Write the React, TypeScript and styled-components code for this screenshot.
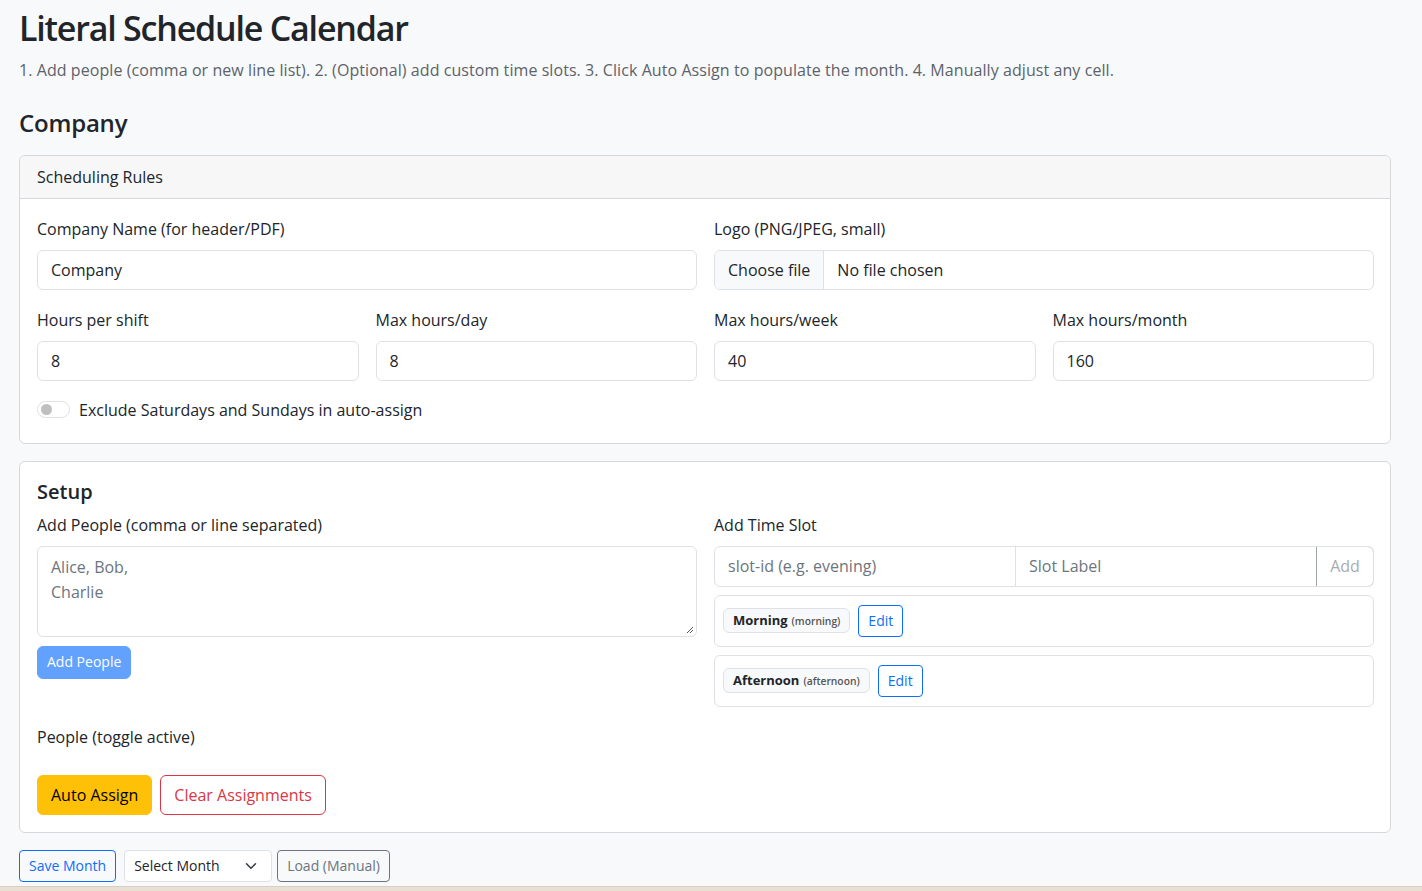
import React from "react";
import styled, { createGlobalStyle } from "styled-components";

const FONT = `"Open Sans", "Noto Sans", "Liberation Sans", sans-serif`;

const Global = createGlobalStyle`
  * { box-sizing: border-box; }
  html, body { margin: 0; padding: 0; }
  body {
    background: #f8f9fa;
    color: #212529;
    font-family: ${FONT};
    font-size: 16px;
    line-height: 1.5;
  }
`;

const Page = styled.div`
  padding: 0 31px 0 19px;
`;

const Title = styled.h1`
  margin: 0;
  padding-top: 8px;
  font-size: 34px;
  font-weight: 600;
  line-height: 1.2;
  letter-spacing: -1.2px;
`;

const Lead = styled.p`
  margin: 9px 0 0;
  color: #5c636a;
  font-size: 16px;
  letter-spacing: 0.07px;
`;

const H4 = styled.h4`
  margin: 27px 0 0;
  font-size: 24px;
  font-weight: 600;
  line-height: 1.2;
  letter-spacing: -0.2px;
`;

const Card = styled.section<{ $mt?: number }>`
  margin-top: ${(p) => p.$mt ?? 0}px;
  background: #fff;
  border: 1px solid #d6d8db;
  border-radius: 6px;
`;

const CardHeader = styled.div`
  padding: 9px 17px 9px;
  background: #f7f7f7;
  border-bottom: 1px solid #d6d8db;
  border-radius: 6px 6px 0 0;
  font-size: 16px;
`;

const CardBody = styled.div<{ $pb?: number }>`
  padding: 17px 16px ${(p) => p.$pb ?? 17}px 17px;
`;

const Grid = styled.div<{ $cols: number }>`
  display: grid;
  grid-template-columns: repeat(${(p) => p.$cols}, 1fr);
  column-gap: 17px;
  margin-bottom: 17px;
`;

const Field = styled.div``;

const Label = styled.label`
  display: block;
  margin-bottom: 8px;
  font-size: 16px;
  line-height: 26px;
`;

const Input = styled.div`
  height: 40px;
  padding: 0 13px;
  display: flex;
  align-items: center;
  border: 1px solid #dee2e6;
  border-radius: 6px;
  background: #fff;
  color: #212529;
  font-size: 16px;
`;

const FileInput = styled.div`
  height: 40px;
  display: flex;
  align-items: stretch;
  border: 1px solid #dee2e6;
  border-radius: 6px;
  overflow: hidden;
  background: #fff;
`;

const FileButton = styled.span`
  display: flex;
  align-items: center;
  padding: 0 13px;
  background: #f8f9fa;
  border-right: 1px solid #dee2e6;
`;

const FileText = styled.span`
  display: flex;
  align-items: center;
  padding: 0 13px;
`;

const SwitchRow = styled.div`
  display: flex;
  align-items: center;
  gap: 9px;
  margin-top: 8px;
  font-size: 16px;
`;

const SwitchTrack = styled.span`
  position: relative;
  width: 33px;
  height: 17px;
  border: 1px solid #dee2e6;
  border-radius: 9px;
  background: #fff;
`;

const SwitchKnob = styled.span`
  position: absolute;
  left: 3px;
  top: 2px;
  width: 11px;
  height: 11px;
  border-radius: 50%;
  background: #bfbfbf;
`;

const SectionTitle = styled.h5`
  margin: 0 0 8px;
  font-size: 20px;
  font-weight: 600;
  line-height: 1.25;
`;

const TwoCol = styled.div`
  display: grid;
  grid-template-columns: 1fr 1fr;
  column-gap: 17px;
  align-items: start;
`;

const TextArea = styled.div`
  height: 91px;
  padding: 8px 13px;
  border: 1px solid #dee2e6;
  border-radius: 6px;
  color: #6c757d;
  position: relative;
  line-height: 25px;
`;

const Grip = styled.svg`
  position: absolute;
  right: 2px;
  bottom: 2px;
`;

const Btn = styled.button<{ $variant: string; $size?: "sm" | "md" | "xs" }>`
  font-family: ${FONT};
  font-size: ${(p) => (p.$size === "md" || !p.$size ? "16px" : "14px")};
  height: ${(p) => (p.$size === "sm" ? "33px" : p.$size === "xs" ? "32px" : "40px")};
  padding: ${(p) => (p.$size === "md" || !p.$size ? "0 13px" : "0 9px")};
  border-radius: ${(p) => (p.$size === "xs" ? "4px" : "6px")};
  cursor: pointer;
  line-height: 1;
  ${(p) =>
    ({
      primaryDisabled: "background:#62a1fe;border:1px solid #62a1fe;color:#fff;",
      warning: "background:#ffc107;border:1px solid #ffc107;color:#000;",
      outlineDanger: "background:#fff;border:1px solid #dc3545;color:#dc3545;",
      outlinePrimary: "background:transparent;border:1px solid #0d6efd;color:#0d6efd;",
      outlineSecondary: "background:transparent;border:1px solid #6c757d;color:#6c757d;",
    } as Record<string, string>)[p.$variant]}
`;

const AddPeopleRow = styled.div`
  margin-top: 9px;
`;

const InputGroup = styled.div`
  display: flex;
  height: 41px;
  border: 1px solid #dee2e6;
  border-radius: 6px;
  overflow: hidden;
`;

const GroupInput = styled.div`
  flex: 1;
  display: flex;
  align-items: center;
  padding: 0 13px;
  color: #6c757d;
  border-right: 1px solid #dee2e6;
  &:nth-child(2) { border-right: none; }
`;

const GroupAdd = styled.div`
  width: 58px;
  display: flex;
  align-items: center;
  justify-content: center;
  border: 1px solid #9ea3a8;
  border-radius: 0 6px 6px 0;
  margin: -1px -1px -1px 0;
  color: #a7acb1;
`;

const SlotItem = styled.div`
  margin-top: 8px;
  height: 52px;
  display: flex;
  align-items: center;
  gap: 8px;
  padding: 0 8px;
  border: 1px solid #dee2e6;
  border-radius: 6px;
`;

const Badge = styled.span`
  display: inline-flex;
  align-items: baseline;
  gap: 4px;
  padding: 3px 9px;
  background: #f8f9fa;
  border: 1px solid #dee2e6;
  border-radius: 6px;
  font-size: 13px;
  font-weight: 700;
  line-height: 16px;
  color: #212529;
`;

const BadgeSmall = styled.span`
  font-size: 10.3px;
  font-weight: 600;
  color: #555;
`;

const EditBtn = styled.button`
  height: 32px;
  padding: 0 9px;
  font-family: ${FONT};
  font-size: 14px;
  background: #fff;
  color: #0d6efd;
  border: 1px solid #0d6efd;
  border-radius: 4px;
`;

const PeopleLabel = styled.div`
  margin-top: 17px;
  line-height: 26px;
`;

const ActionRow = styled.div`
  margin-top: 25px;
  display: flex;
  gap: 8px;
`;

const Toolbar = styled.div`
  margin-top: 17px;
  display: flex;
  align-items: center;
  gap: 8px;
`;

const SelectBox = styled.div`
  width: 148px;
  height: 32px;
  display: flex;
  align-items: center;
  justify-content: space-between;
  padding: 0 14px 0 9px;
  background: #fff;
  border: 1px solid #dee2e6;
  border-radius: 4px;
  font-size: 14px;
  margin-right: -3px;
`;

const BottomStrip = styled.div`
  margin: 4px -31px 0 -19px;
  height: 20px;
  background: #e9dfd3;
  border-top: 1px solid #d8cfc4;
`;

export default function App() {
  return (
    <>
      <Global />
      <Page>
        <Title>Literal Schedule Calendar</Title>
        <Lead>
          1. Add people (comma or new line list). 2. (Optional) add custom time slots. 3. Click Auto Assign to
          populate the month. 4. Manually adjust any cell.
        </Lead>
        <H4>Company</H4>
        <Card $mt={17}>
          <CardHeader>Scheduling Rules</CardHeader>
          <CardBody $pb={21}>
            <Grid $cols={2}>
              <Field>
                <Label>Company Name (for header/PDF)</Label>
                <Input>Company</Input>
              </Field>
              <Field>
                <Label>Logo (PNG/JPEG, small)</Label>
                <FileInput>
                  <FileButton>Choose file</FileButton>
                  <FileText>No file chosen</FileText>
                </FileInput>
              </Field>
            </Grid>
            <Grid $cols={4}>
              <Field>
                <Label>Hours per shift</Label>
                <Input>8</Input>
              </Field>
              <Field>
                <Label>Max hours/day</Label>
                <Input>8</Input>
              </Field>
              <Field>
                <Label>Max hours/week</Label>
                <Input>40</Input>
              </Field>
              <Field>
                <Label>Max hours/month</Label>
                <Input>160</Input>
              </Field>
            </Grid>
            <SwitchRow>
              <SwitchTrack>
                <SwitchKnob />
              </SwitchTrack>
              Exclude Saturdays and Sundays in auto-assign
            </SwitchRow>
          </CardBody>
        </Card>

        <Card $mt={17}>
          <CardBody>
            <SectionTitle>Setup</SectionTitle>
            <TwoCol>
              <div>
                <Label>Add People (comma or line separated)</Label>
                <TextArea>
                  Alice, Bob,
                  <br />
                  Charlie
                  <Grip width="8" height="8" viewBox="0 0 8 8">
                    <path d="M7 1 L1 7 M7 4 L4 7" stroke="#555" strokeWidth="1" />
                  </Grip>
                </TextArea>
                <AddPeopleRow>
                  <Btn $variant="primaryDisabled" $size="sm">Add People</Btn>
                </AddPeopleRow>
              </div>
              <div>
                <Label>Add Time Slot</Label>
                <InputGroup>
                  <GroupInput>slot-id (e.g. evening)</GroupInput>
                  <GroupInput>Slot Label</GroupInput>
                  <GroupAdd>Add</GroupAdd>
                </InputGroup>
                <SlotItem>
                  <Badge>
                    Morning <BadgeSmall>(morning)</BadgeSmall>
                  </Badge>
                  <EditBtn>Edit</EditBtn>
                </SlotItem>
                <SlotItem>
                  <Badge>
                    Afternoon <BadgeSmall>(afternoon)</BadgeSmall>
                  </Badge>
                  <EditBtn>Edit</EditBtn>
                </SlotItem>
              </div>
            </TwoCol>
            <PeopleLabel>People (toggle active)</PeopleLabel>
            <ActionRow>
              <Btn $variant="warning">Auto Assign</Btn>
              <Btn $variant="outlineDanger">Clear Assignments</Btn>
            </ActionRow>
          </CardBody>
        </Card>

        <Toolbar>
          <Btn $variant="outlinePrimary" $size="xs">Save Month</Btn>
          <SelectBox>
            Select Month
            <svg width="12" height="12" viewBox="0 0 16 16">
              <path d="M2 5l6 6 6-6" fill="none" stroke="#343a40" strokeWidth="2" strokeLinecap="round" strokeLinejoin="round" />
            </svg>
          </SelectBox>
          <Btn $variant="outlineSecondary" $size="xs">Load (Manual)</Btn>
        </Toolbar>
        <BottomStrip />
      </Page>
    </>
  );
}
